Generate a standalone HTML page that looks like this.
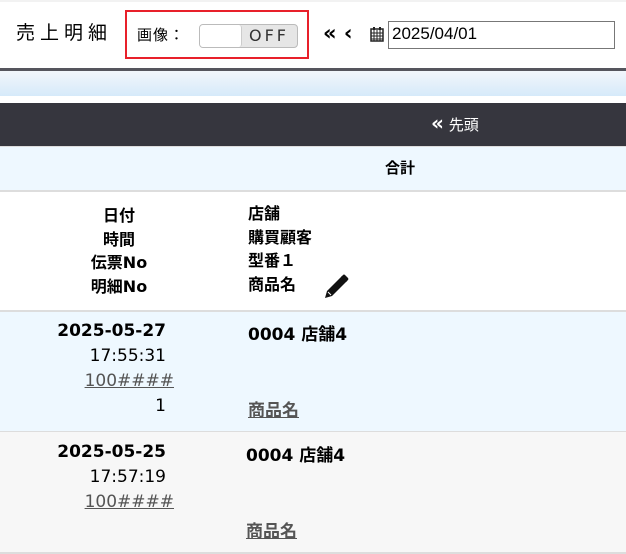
<!DOCTYPE html><html><head><meta charset="utf-8"><style>
*{margin:0;padding:0;box-sizing:border-box}
body{width:626px;height:554px;overflow:hidden;background:#fff;font-family:"DejaVu Sans","Noto Sans CJK JP",sans-serif;position:relative;color:#000}
.a{position:absolute;white-space:nowrap}
.b{font-weight:bold;font-size:17px}
u{color:#555;text-decoration:underline}
</style></head><body>
<div class="a" style="left:0;top:0;width:626px;height:2px;background:#f2f2f2"></div>
<div class="a" style="left:16px;top:18px;font-size:19px;letter-spacing:5px">売上明細</div>
<div class="a" style="left:125px;top:10px;height:49px;border:2px solid #e8202a;width:184px"></div>
<div class="a" style="left:137px;top:24px;font-size:15px;letter-spacing:1px">画像：</div>
<div class="a" style="left:199px;top:24px;width:99px;height:24px;border:1px solid #bbb;border-radius:4px;background:#e6e6e6"></div>
<div class="a" style="left:200px;top:25px;width:42px;height:22px;background:#fff;border-radius:3px;border-right:1px solid #ccc"></div>
<div class="a" style="left:249px;top:26px;font-size:16px;letter-spacing:3px;color:#333">OFF</div>
<div class="a" style="left:323px;top:21px;font-size:21px;font-weight:bold">«&nbsp;‹</div>
<svg class="a" style="left:370px;top:27px" width="14" height="15" viewBox="0 0 14 15"><rect x="1" y="2" width="12" height="12" fill="none" stroke="#222" stroke-width="1.5"/><path d="M1 6h12M1 9h12M1 12h12M4 3v11M7 3v11M10 3v11" stroke="#222" stroke-width="1"/><path d="M4 0v3M10 0v3" stroke="#222" stroke-width="2"/></svg>
<div class="a" style="left:388px;top:21px;width:227px;height:28px;border:1px solid #777;font-size:17px;padding:2px 3px;font-family:'Liberation Sans',sans-serif">2025/04/01</div>
<div class="a" style="left:0;top:68px;width:626px;height:3px;background:#55555d"></div>
<div class="a" style="left:0;top:71px;width:626px;height:25px;background:linear-gradient(#f2f6fb,#d6eafa)"></div>
<div class="a" style="left:0;top:103px;width:626px;height:43px;background:#36363e"></div>
<div class="a" style="left:431px;top:113px;font-size:15px;color:#fff"><b style="font-size:20px;line-height:20px">«</b>&nbsp;先頭</div>
<div class="a" style="left:0;top:146px;width:626px;height:44px;background:#eef8ff;border-top:1px solid #ddd"></div>
<div class="a b" style="left:385px;top:157px;font-size:15px">合計</div>
<div class="a" style="left:0;top:190px;width:626px;height:2px;background:#ddd"></div>
<div class="a b" style="left:79px;top:204px;font-size:16px;line-height:23.5px;text-align:center;width:80px">日付<br>時間<br>伝票No<br>明細No</div>
<div class="a b" style="left:248px;top:202px;font-size:16px;line-height:23.5px">店舗<br>購買顧客<br>型番１<br>商品名</div>
<svg class="a" style="left:323px;top:273px" width="27" height="26" viewBox="0 0 27 26"><path d="M2 25l2-7L19 3l5 5L9 23z" fill="#111"/><path d="M18 4l2-2a1.5 1.5 0 012 0l3 3a1.5 1.5 0 010 2l-2 2z" fill="#111"/><path d="M5 19l3 3" stroke="#fff" stroke-width="1"/></svg>
<div class="a" style="left:0;top:310px;width:626px;height:2px;background:#ddd"></div>
<div class="a" style="left:0;top:312px;width:626px;height:119px;background:#eef8ff"></div>
<div class="a" style="left:0;top:431px;width:626px;height:1px;background:#ddd"></div>
<div class="a" style="left:0;top:432px;width:626px;height:120px;background:#f7f7f7"></div>
<div class="a" style="left:0;top:552px;width:626px;height:2px;background:#ddd"></div>
<div class="a" style="left:20px;top:319px;width:146px;text-align:right;font-size:17px;line-height:25px"><b>2025-05-27</b><br>17:55:31<br><u>100####</u><span style="margin-right:-8px"></span><br>1</div>
<div class="a b" style="left:248px;top:320px">0004 店舗4</div>
<div class="a b" style="left:248px;top:396px"><u>商品名</u></div>
<div class="a" style="left:20px;top:440px;width:146px;text-align:right;font-size:17px;line-height:25px"><b>2025-05-25</b><br>17:57:19<br><u>100####</u><span style="margin-right:-8px"></span></div>
<div class="a b" style="left:246px;top:441px">0004 店舗4</div>
<div class="a b" style="left:246px;top:517px"><u>商品名</u></div>
</body></html>
